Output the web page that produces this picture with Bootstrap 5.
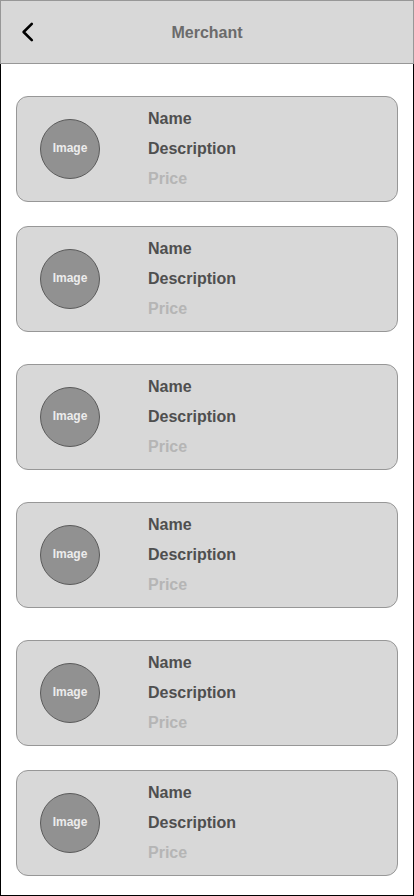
<!DOCTYPE html>
<html lang="en">
<head>
<meta charset="utf-8">
<meta name="viewport" content="width=device-width, initial-scale=1">
<title>Merchant</title>
<link href="https://cdn.jsdelivr.net/npm/bootstrap@5.3.0/dist/css/bootstrap.min.css" rel="stylesheet">
<style>
  body { font-family: "Liberation Sans", Arial, Helvetica, sans-serif; font-weight: 700; background: #fff; }
  .topbar { height: 64px; background: #d8d8d8; border: 1px solid #979797; }
  .topbar-title { font-size: 16px; line-height: 24px; color: #6b6b6b; padding-top: 2px; }
  .topbar-side { width: 56px; }
  .back-btn { line-height: 0; }
  .screen { border: 1px solid #000; border-top: 0; padding: 32px 15px 19px; }
  .item { background: #d8d8d8; border: 1px solid #979797; border-radius: 12px; padding: 7px 23px; gap: 48px; }
  .item-spaced { margin-top: 8px; }
  .avatar { width: 60px; height: 60px; background: #919191; border: 1px solid #5a5a5a; color: #ececec; font-size: 12px; line-height: 16px; padding-bottom: 2px; }
  .item-text { font-size: 16px; line-height: 30px; color: #4f4f4f; }
  .item-price { color: #b5b5b5; }
</style>
</head>
<body>
<div class="d-flex flex-column min-vh-100">
  <header class="topbar d-flex align-items-center">
    <div class="topbar-side">
      <button type="button" class="back-btn btn border-0 rounded-0 p-3" aria-label="Back">
        <svg width="22" height="24" viewBox="0 0 22 24" fill="none" stroke="#000" stroke-width="2.6" stroke-linecap="round" stroke-linejoin="round" aria-hidden="true"><path d="M14.8 3.8 6.6 12l8.2 8.2"/></svg>
      </button>
    </div>
    <h1 class="topbar-title flex-grow-1 text-center fw-bold m-0">Merchant</h1>
    <div class="topbar-side"></div>
  </header>
  <main class="screen flex-grow-1">
    <ul class="list-unstyled d-flex flex-column gap-4 m-0">
      <li class="item d-flex align-items-center">
        <div class="avatar rounded-circle d-flex align-items-center justify-content-center flex-shrink-0">Image</div>
        <div class="item-text"><div>Name</div><div>Description</div><div class="item-price">Price</div></div>
      </li>
      <li class="item d-flex align-items-center">
        <div class="avatar rounded-circle d-flex align-items-center justify-content-center flex-shrink-0">Image</div>
        <div class="item-text"><div>Name</div><div>Description</div><div class="item-price">Price</div></div>
      </li>
      <li class="item item-spaced d-flex align-items-center">
        <div class="avatar rounded-circle d-flex align-items-center justify-content-center flex-shrink-0">Image</div>
        <div class="item-text"><div>Name</div><div>Description</div><div class="item-price">Price</div></div>
      </li>
      <li class="item item-spaced d-flex align-items-center">
        <div class="avatar rounded-circle d-flex align-items-center justify-content-center flex-shrink-0">Image</div>
        <div class="item-text"><div>Name</div><div>Description</div><div class="item-price">Price</div></div>
      </li>
      <li class="item item-spaced d-flex align-items-center">
        <div class="avatar rounded-circle d-flex align-items-center justify-content-center flex-shrink-0">Image</div>
        <div class="item-text"><div>Name</div><div>Description</div><div class="item-price">Price</div></div>
      </li>
      <li class="item d-flex align-items-center">
        <div class="avatar rounded-circle d-flex align-items-center justify-content-center flex-shrink-0">Image</div>
        <div class="item-text"><div>Name</div><div>Description</div><div class="item-price">Price</div></div>
      </li>
    </ul>
  </main>
</div>
<script src="https://cdn.jsdelivr.net/npm/bootstrap@5.3.0/dist/js/bootstrap.bundle.min.js"></script>
</body>
</html>
